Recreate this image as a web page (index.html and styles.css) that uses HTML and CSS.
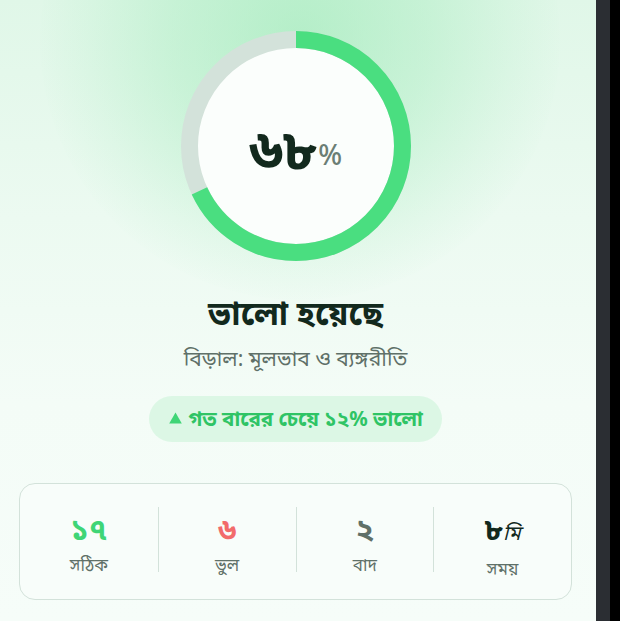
FILE: index.html
```html
<!DOCTYPE html>
<html lang="bn">
<head>
<meta charset="utf-8">
<link rel="stylesheet" href="styles.css">
</head>
<body>
<div class="frame">
  <main class="screen">
    <div class="glow"></div>
    <section class="hero">
      <div class="ring">
        <svg class="ring-svg" viewBox="0 0 230 230" width="230" height="230">
          <circle cx="115" cy="115" r="106.5" fill="#fbfefc" stroke="#d3e2da" stroke-width="17"/>
          <circle cx="115" cy="115" r="106.5" fill="none" stroke="#4ade80" stroke-width="17"
            stroke-dasharray="455.0 1000" transform="rotate(-90 115 115)"/>
        </svg>
        <div class="score"><span class="score-num">৬৮</span><span class="score-pct">%</span></div>
      </div>
      <h1 class="title">ভালো হয়েছে</h1>
      <p class="subtitle">বিড়াল: মূলভাব ও ব্যঙ্গরীতি</p>
      <div class="pill"><svg class="tri" viewBox="0 0 13 12" width="13" height="12"><path d="M6.5 0.5 L12.8 11.5 L0.2 11.5 Z" fill="#3fd576"/></svg><span>গত বারের চেয়ে ১২% ভালো</span></div>
    </section>
    <section class="stats">
      <div class="stat"><div class="stat-val green">১৭</div><div class="stat-label">সঠিক</div></div>
      <div class="stat"><div class="stat-val red">৬</div><div class="stat-label">ভুল</div></div>
      <div class="stat"><div class="stat-val gray">২</div><div class="stat-label">বাদ</div></div>
      <div class="stat"><div class="stat-val dark">৮<span class="unit">মি</span></div><div class="stat-label">সময়</div></div>
    </section>
  </main>
  <div class="scrollbar"></div>
</div>
</body>
</html>
```
FILE: styles.css
```css
html, body {
  margin: 0;
  padding: 0;
  background: #000;
  height: 621px;
  overflow: hidden;
}
body {
  font-family: "Noto Sans", "Noto Sans Bengali", "Lohit Bengali", sans-serif;
}
.frame {
  display: flex;
  width: 620px;
  height: 621px;
}
.screen {
  position: relative;
  width: 596px;
  height: 621px;
  box-sizing: border-box;
  padding: 31px 24px 0 19px;
  background: linear-gradient(180deg, #e0f7e8 0%, #ecfaf1 35%, #f4fcf7 65%, #f6fdf9 100%);
  overflow: hidden;
}
.glow {
  position: absolute;
  left: 40px;
  top: -220px;
  width: 520px;
  height: 520px;
  border-radius: 50%;
  background: radial-gradient(circle, rgba(150, 232, 178, 0.6) 0%, rgba(150, 232, 178, 0.35) 35%, rgba(150, 232, 178, 0.12) 58%, rgba(150, 232, 178, 0) 72%);
  pointer-events: none;
}
.scrollbar {
  width: 14px;
  height: 621px;
  background: #2b2e33;
}
.hero {
  position: relative;
  display: flex;
  flex-direction: column;
  align-items: center;
}
.ring {
  position: relative;
  width: 230px;
  height: 230px;
}
.ring-svg {
  display: block;
}
.score {
  position: absolute;
  inset: 0;
  display: flex;
  align-items: center;
  justify-content: center;
  padding-top: 2px;
  color: #12291d;
}
.score-num {
  font-size: 56px;
  font-weight: 700;
  line-height: 1;
}
.score-pct {
  font-size: 28px;
  color: #6b7e75;
  font-weight: 500;
  margin-top: 14px;
  margin-left: 1px;
}
.title {
  margin: 32px 0 0;
  font-size: 33px;
  line-height: 40px;
  font-weight: 700;
  color: #12291d;
}
.subtitle {
  margin: 11px 0 0;
  font-size: 21px;
  line-height: 28px;
  color: #5f7068;
}
.pill {
  margin-top: 24px;
  height: 46px;
  padding: 0 19px 0 20px;
  border-radius: 23px;
  background: #dcf7e5;
  color: #2fc465;
  font-size: 20.5px;
  font-weight: 700;
  display: flex;
  align-items: center;
  gap: 6px;
}
.tri {
  display: block;
  margin-top: -2px;
}
.stats {
  position: relative;
  margin-top: 41px;
  height: 117px;
  box-sizing: border-box;
  padding-top: 23px;
  border: 1.5px solid #d3e2da;
  border-radius: 16px;
  background: #f8fdfa;
  display: grid;
  grid-template-columns: repeat(4, 1fr);
  align-items: start;
}
.stat {
  height: 65px;
  display: flex;
  flex-direction: column;
  align-items: center;
  border-left: 1px solid #d3e2da;
}
.stat:first-child {
  border-left: none;
}
.stat-val {
  font-size: 30px;
  font-weight: 700;
  line-height: 44px;
}
.stat-val.green { color: #3fd576; }
.stat-val.red { color: #f26b6b; }
.stat-val.gray { color: #5f7068; }
.stat-val.dark { color: #12291d; }
.unit {
  font-size: 20px;
  font-weight: 400;
  font-style: italic;
}
.stat-label {
  margin-top: 3px;
  font-size: 17px;
  line-height: 22px;
  color: #5f7068;
}
```
